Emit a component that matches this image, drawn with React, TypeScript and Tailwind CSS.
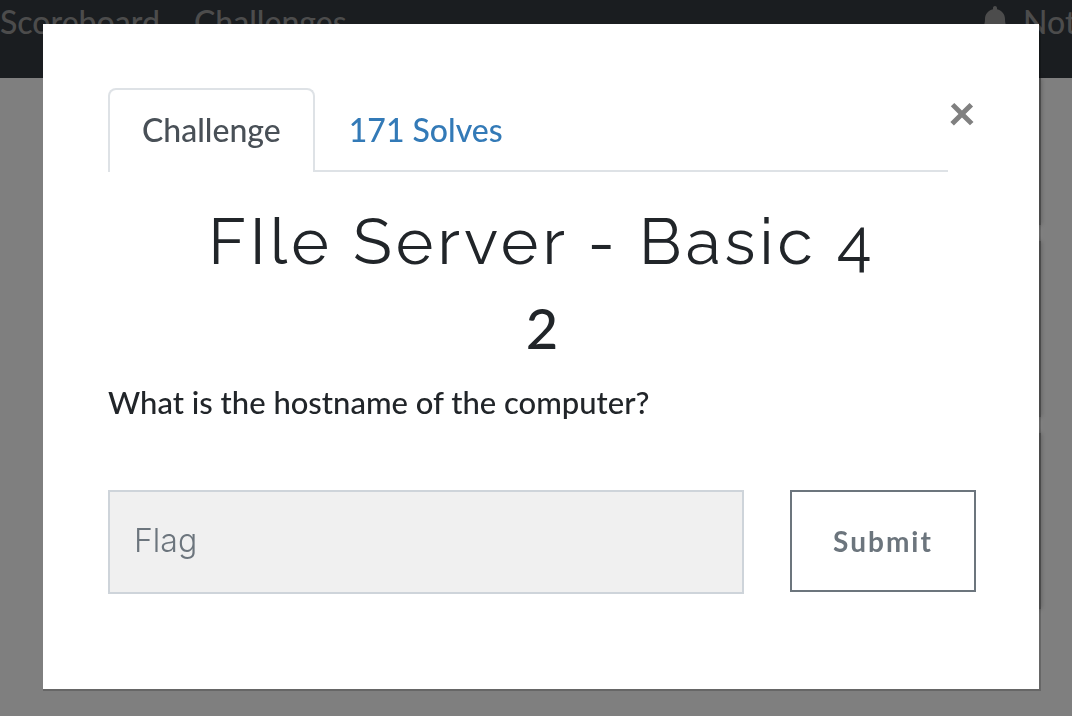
import { FaBell } from "react-icons/fa";

function SiteHeader() {
  return (
    <header className="h-[78px] bg-[#343a40]">
      <nav className="flex items-center justify-between overflow-hidden whitespace-nowrap text-[32px] leading-[44px] font-medium text-[#999999]">
        <div className="flex gap-[34px]">
          <a href="#scoreboard">Scoreboard</a>
          <a href="#challenges">Challenges</a>
        </div>
        <a href="#notifications" className="flex w-[91px] items-center gap-3.5">
          <FaBell className="h-8 w-7 shrink-0" aria-hidden="true" />
          Notifications
        </a>
      </nav>
    </header>
  );
}

function ChallengeBoard() {
  return (
    <div className="flex flex-col gap-4 pr-[31px] pl-16">
      <div className="h-[147px] bg-[#b8b8b8] shadow-[0_0_5px_rgba(0,0,0,0.3)]" />
      <div className="h-44 bg-[#b8b8b8] shadow-[0_0_5px_rgba(0,0,0,0.3)]" />
      <div className="h-44 bg-[#b8b8b8] shadow-[0_0_5px_rgba(0,0,0,0.3)]" />
    </div>
  );
}

function Tabs() {
  return (
    <div className="flex items-start">
      <div role="tablist" className="flex flex-1 gap-0.5 border-b-2 border-[#dee2e6]">
        <button
          type="button"
          role="tab"
          aria-selected="true"
          className="-mb-0.5 rounded-t-lg border-2 border-b-0 border-[#dee2e6] bg-white px-8 pt-4 pb-[18px] text-[32px] leading-12 font-medium text-[#495057]"
        >
          Challenge
        </button>
        <button
          type="button"
          role="tab"
          aria-selected="false"
          className="px-8 pt-[18px] pb-4 text-[32px] leading-12 font-medium text-[#337ab7]"
        >
          171 Solves
        </button>
      </div>
      <button
        type="button"
        aria-label="Close"
        className="flex h-12 w-7 items-center justify-center text-5xl leading-12 font-black text-[#808080]"
      >
        ×
      </button>
    </div>
  );
}

function ChallengeDialog() {
  return (
    <section
      role="dialog"
      aria-modal="true"
      aria-labelledby="challenge-name"
      className="w-full bg-white pt-16 pr-[63px] pb-[95px] pl-[65px] text-[#212529] shadow-[1px_1px_0_1px_rgba(0,0,0,0.2)]"
    >
      <Tabs />
      <h2
        id="challenge-name"
        className="mt-8 text-center font-[Raleway,Lato,sans-serif] text-[64px] leading-[76px] tracking-[4px]"
      >
        FIle Server - Basic 4
      </h2>
      <h3 className="mt-3.5 text-center text-[56px] leading-[68px] font-medium">2</h3>
      <p className="mt-4 text-[31px] leading-12 font-medium">What is the hostname of the computer?</p>
      <form className="mt-16 flex items-start gap-[46px]" onSubmit={(e) => e.preventDefault()}>
        <input
          type="text"
          aria-label="Flag"
          placeholder="Flag"
          className="h-[104px] min-w-0 flex-1 border-2 border-[#ced4da] bg-[#f0f0f0] px-6 pb-1 font-[Inter,sans-serif] text-[32px] font-light placeholder:text-[#6c757d] focus:outline-none"
        />
        <button
          type="submit"
          className="h-[102px] w-[186px] border-2 border-[#6c757d] text-[28px] font-bold tracking-[2px] text-[#6c757d]"
        >
          Submit
        </button>
      </form>
    </section>
  );
}

export default function App() {
  return (
    <div className="h-screen overflow-hidden bg-white font-[Lato,sans-serif]">
      <SiteHeader />
      <ChallengeBoard />
      <div className="fixed inset-0 overflow-hidden bg-black/50 pt-6 pr-[33px] pl-[43px]">
        <ChallengeDialog />
      </div>
    </div>
  );
}
